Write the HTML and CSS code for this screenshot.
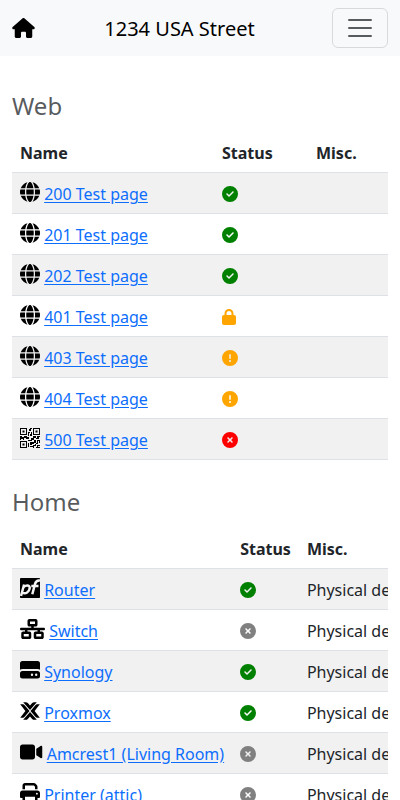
FILE: index.html
```html
<!DOCTYPE html>
<html lang="en">
<head>
<meta charset="utf-8">
<meta name="viewport" content="width=device-width, initial-scale=1">
<title>1234 USA Street</title>
<link rel="stylesheet" href="styles.css">
</head>
<body>
<svg class="sprite" aria-hidden="true">
  <symbol id="house" viewBox="0 0 576 512"><path d="M575.8 255.5c0 18-15 32.1-32 32.1h-32l.7 160.2c0 2.7-.2 5.4-.5 8.1V472c0 22.1-17.9 40-40 40H392c-22.1 0-40-17.9-40-40V384c0-17.7-14.3-32-32-32H256c-17.7 0-32 14.3-32 32v88c0 22.1-17.9 40-40 40H104c-22.1 0-40-17.9-40-40V287.6H32c-18 0-32-14-32-32.1c0-9 3-17 10-24L266.4 8c7-7 15-8 22-8s15 2 21 7L564.8 231.5c8 7 12 15 11 24z"/></symbol>
  <symbol id="globe" viewBox="0 0 512 512"><path d="M352 256c0 22.2-1.2 43.6-3.3 64H163.3c-2.2-20.4-3.3-41.8-3.3-64s1.2-43.6 3.3-64H348.7c2.2 20.4 3.3 41.8 3.3 64zm28.8-64H503.9c5.3 20.5 8.1 41.9 8.1 64s-2.8 43.5-8.1 64H380.8c2.1-20.6 3.2-42 3.2-64s-1.1-43.4-3.2-64zm112.6-32H376.7c-10-63.9-29.8-117.4-55.3-151.6c78.3 20.7 142 77.5 171.9 151.6zm-149.1 0H167.7c6.1-36.4 15.5-68.6 27-94.7c10.5-23.6 22.2-40.7 33.5-51.5C239.4 3.2 248.7 0 256 0s16.6 3.2 27.8 13.8c11.3 10.8 23 27.9 33.5 51.5c11.6 26 20.9 58.2 27 94.7zm-209 0H18.6C48.6 85.9 112.2 29.1 190.6 8.4C165.1 42.6 145.3 96.1 135.3 160zM8.1 192H131.2c-2.1 20.6-3.2 42-3.2 64s1.1 43.4 3.2 64H8.1C2.8 299.5 0 278.1 0 256s2.8-43.5 8.1-64zM194.7 446.6c-11.6-26-20.9-58.2-27-94.6H344.3c-6.1 36.4-15.5 68.6-27 94.6c-10.5 23.6-22.2 40.7-33.5 51.5C272.6 508.8 263.3 512 256 512s-16.6-3.2-27.8-13.8c-11.3-10.8-23-27.9-33.5-51.5zM135.3 352c10 63.9 29.8 117.4 55.3 151.6C112.2 482.9 48.6 426.1 18.6 352H135.3zm358.1 0c-30 74.1-93.6 130.9-171.9 151.6c25.5-34.2 45.2-87.7 55.3-151.6H493.4z"/></symbol>
  <symbol id="check" viewBox="0 0 512 512"><path d="M256 512A256 256 0 1 0 256 0a256 256 0 1 0 0 512zM369 209L241 337c-9.4 9.4-24.6 9.4-33.9 0l-64-64c-9.4-9.4-9.4-24.6 0-33.9s24.6-9.4 33.9 0l47 47L335 175c9.4-9.4 24.6-9.4 33.9 0s9.4 24.6 0 33.9z"/></symbol>
  <symbol id="xmark" viewBox="0 0 512 512"><path d="M256 512A256 256 0 1 0 256 0a256 256 0 1 0 0 512zM175 175c9.4-9.4 24.6-9.4 33.9 0l47 47 47-47c9.4-9.4 24.6-9.4 33.9 0s9.4 24.6 0 33.9l-47 47 47 47c9.4 9.4 9.4 24.6 0 33.9s-24.6 9.4-33.9 0l-47-47-47 47c-9.4 9.4-24.6 9.4-33.9 0s-9.4-24.6 0-33.9l47-47-47-47c-9.4-9.4-9.4-24.6 0-33.9z"/></symbol>
  <symbol id="exclaim" viewBox="0 0 512 512"><path d="M256 512A256 256 0 1 0 256 0a256 256 0 1 0 0 512zm0-384c13.3 0 24 10.7 24 24V264c0 13.3-10.7 24-24 24s-24-10.7-24-24V152c0-13.3 10.7-24 24-24zM224 352a32 32 0 1 1 64 0 32 32 0 1 1 -64 0z"/></symbol>
  <symbol id="lock" viewBox="0 0 448 512"><path d="M144 144v48H304V144c0-44.2-35.8-80-80-80s-80 35.8-80 80zM80 192V144C80 64.5 144.5 0 224 0s144 64.5 144 144v48h16c35.3 0 64 28.7 64 64V448c0 35.3-28.7 64-64 64H64c-35.3 0-64-28.7-64-64V256c0-35.3 28.7-64 64-64H80z"/></symbol>
  <symbol id="network" viewBox="0 0 640 512"><path d="M256 64H384v64H256V64zM240 0c-26.5 0-48 21.5-48 48v96c0 26.5 21.5 48 48 48h48v32H32c-17.7 0-32 14.3-32 32s14.3 32 32 32h96v32H80c-26.5 0-48 21.5-48 48v96c0 26.5 21.5 48 48 48H240c26.5 0 48-21.5 48-48V368c0-26.5-21.5-48-48-48H192V288H448v32H400c-26.5 0-48 21.5-48 48v96c0 26.5 21.5 48 48 48H560c26.5 0 48-21.5 48-48V368c0-26.5-21.5-48-48-48H512V288h96c17.7 0 32-14.3 32-32s-14.3-32-32-32H352V192h48c26.5 0 48-21.5 48-48V48c0-26.5-21.5-48-48-48H240zM96 448V384H224v64H96zm320-64H544v64H416V384z"/></symbol>
  <symbol id="video" viewBox="0 0 576 512"><path d="M0 128C0 92.7 28.7 64 64 64H320c35.3 0 64 28.7 64 64V384c0 35.3-28.7 64-64 64H64c-35.3 0-64-28.7-64-64V128zM559.1 99.8c10.4 5.6 16.9 16.4 16.9 28.2V384c0 11.8-6.5 22.6-16.9 28.2s-23 5-32.9-1.6l-96-64L416 337.1V320 192 174.9l14.2-9.5 96-64c9.8-6.5 22.4-7.2 32.9-1.6z"/></symbol>
  <symbol id="print" viewBox="0 0 512 512"><path d="M128 0C92.7 0 64 28.7 64 64v96h64V64H354.7L384 93.3V160h64V93.3c0-17-6.7-33.3-18.7-45.3L400 18.7C388 6.7 371.7 0 354.7 0H128zM384 352v32 64H128V384 368 352H384zm64 32h32c17.7 0 32-14.3 32-32V256c0-35.3-28.7-64-64-64H64c-35.3 0-64 28.7-64 64v96c0 17.7 14.3 32 32 32H64v64c0 35.3 28.7 64 64 64H384c35.3 0 64-28.7 64-64V384zM432 248a24 24 0 1 1 0 48 24 24 0 1 1 0-48z"/></symbol>
  <symbol id="drive" viewBox="0 0 20 20"><path fill-rule="evenodd" d="M2.500 1h15A2.500 2.500 0 0 1 20 3.500V9.700Q19 9.100 17.500 9.100H2.500Q1 9.100 0 9.700V3.500A2.500 2.500 0 0 1 2.500 1zM2.500 11h15a2.500 2.500 0 0 1 2.500 2.500v2.500a2.500 2.500 0 0 1-2.500 2.500h-15A2.500 2.500 0 0 1 0 16v-2.500A2.500 2.500 0 0 1 2.500 11zM12 13.500a1.200 1.200 0 1 0 0 2.400 1.200 1.200 0 0 0 0-2.400zM16.200 13.500a1.200 1.200 0 1 0 0 2.400 1.200 1.200 0 0 0 0-2.400z"/></symbol>
  <symbol id="proxmox" viewBox="0 0 20 20">
    <path d="M3.200 1.200H5.800Q7 1.200 7.800 2.100L10 4.500 12.200 2.100Q13 1.200 14.200 1.200H16.800L10 8.900zM3.200 18.800H5.800Q7 18.800 7.800 17.900L10 15.500 12.200 17.900Q13 18.800 14.200 18.800H16.800L10 11.100z"/>
    <path d="M.2 3.300H2.800Q3.900 3.300 4.600 4.200L9.500 10 4.600 15.800Q3.900 16.700 2.800 16.700H.2L5.400 10zM19.800 3.300H17.200Q16.100 3.300 15.400 4.200L10.500 10 15.400 15.800Q16.100 16.700 17.200 16.700H19.800L14.600 10z"/>
  </symbol>
  <symbol id="pfsense" viewBox="0 0 20 20">
    <rect width="20" height="20" rx=".8"/>
    <g fill="none" stroke="#f4f4f4" stroke-width="2.500">
      <path d="M1 18 4.100 6.500M3.500 9.500C5 6.800 10 6.500 9.700 10.200 9.400 14 5.500 16.500 2.500 14.700"/>
      <path d="M12.300 16.300 15 6Q16 1.900 20 2.500M11.300 7.900H18.500"/>
    </g>
  </symbol>
  <symbol id="qr" viewBox="0 0 20 20"><path fill-rule="evenodd" d="M0 0h7v7H0zM1 1v5h5V1zM2.500 2.500h2v2h-2zM13 0h7v7h-7zM14 1v5h5V1zM15.500 2.500h2v2h-2zM0 13h7v7H0zM1 14v5h5v-5zM2.500 15.500h2v2h-2zM10 0h2v1h-1v2h-2V1h1zM8 4h2v1H9v3H8zM11 4h1v4h-2V6h1zM0 8h2v1h2V8h3v1h2v2H6v-1H4v2H3v-1H1v1H0zM8 12h3v-2h2V8h3v2h-2v2h-2v1H8zM17 8h3v1h-1v2h-3v-1h1zM10 14h4v-2h2v3h-2v1h-2v1h-2zM17 12h3v3h-1v-2h-1v3h-2v-1h1zM8 15h1v4H8zM10 18h3v-1h2v-1h1v2h-2v2h-1v-1h-3zM17 17h3v1h-2v1h2v1h-4v-1h1z"/></symbol>
</svg>

<nav class="navbar">
  <a class="home" href="#" aria-label="Home"><svg class="icon icon-wide"><use href="#house"/></svg></a>
  <a class="brand" href="#">1234 USA Street</a>
  <button class="toggler" type="button" aria-label="Menu"><svg viewBox="0 0 30 30"><path d="M4 7h22M4 15h22M4 23h22"/></svg></button>
</nav>

<main>
  <section>
    <h2>Web</h2>
    <table class="web">
      <colgroup><col class="col-name"><col class="col-status"><col></colgroup>
      <thead><tr><th>Name</th><th>Status</th><th>Misc.</th></tr></thead>
      <tbody>
        <tr><td><svg class="icon"><use href="#globe"/></svg> <a href="#">200 Test page</a></td><td><svg class="status ok"><use href="#check"/></svg></td><td></td></tr>
        <tr><td><svg class="icon"><use href="#globe"/></svg> <a href="#">201 Test page</a></td><td><svg class="status ok"><use href="#check"/></svg></td><td></td></tr>
        <tr><td><svg class="icon"><use href="#globe"/></svg> <a href="#">202 Test page</a></td><td><svg class="status ok"><use href="#check"/></svg></td><td></td></tr>
        <tr><td><svg class="icon"><use href="#globe"/></svg> <a href="#">401 Test page</a></td><td><svg class="status locked"><use href="#lock"/></svg></td><td></td></tr>
        <tr><td><svg class="icon"><use href="#globe"/></svg> <a href="#">403 Test page</a></td><td><svg class="status warn"><use href="#exclaim"/></svg></td><td></td></tr>
        <tr><td><svg class="icon"><use href="#globe"/></svg> <a href="#">404 Test page</a></td><td><svg class="status warn"><use href="#exclaim"/></svg></td><td></td></tr>
        <tr><td><svg class="icon"><use href="#qr"/></svg> <a href="#">500 Test page</a></td><td><svg class="status error"><use href="#xmark"/></svg></td><td></td></tr>
      </tbody>
    </table>
  </section>

  <section>
    <h2>Home</h2>
    <table>
      <thead><tr><th>Name</th><th>Status</th><th>Misc.</th></tr></thead>
      <tbody>
        <tr><td><svg class="icon"><use href="#pfsense"/></svg> <a href="#">Router</a></td><td><svg class="status ok"><use href="#check"/></svg></td><td>Physical device</td></tr>
        <tr><td><svg class="icon icon-wider"><use href="#network"/></svg> <a href="#">Switch</a></td><td><svg class="status off"><use href="#xmark"/></svg></td><td>Physical device</td></tr>
        <tr><td><svg class="icon"><use href="#drive"/></svg> <a href="#">Synology</a></td><td><svg class="status ok"><use href="#check"/></svg></td><td>Physical device</td></tr>
        <tr><td><svg class="icon"><use href="#proxmox"/></svg> <a href="#">Proxmox</a></td><td><svg class="status ok"><use href="#check"/></svg></td><td>Physical device</td></tr>
        <tr><td><svg class="icon icon-wide"><use href="#video"/></svg> <a href="#">Amcrest1 (Living Room)</a></td><td><svg class="status off"><use href="#xmark"/></svg></td><td>Physical device</td></tr>
        <tr><td><svg class="icon"><use href="#print"/></svg> <a href="#">Printer (attic)</a></td><td><svg class="status off"><use href="#xmark"/></svg></td><td>Physical device</td></tr>
      </tbody>
    </table>
  </section>
</main>
</body>
</html>
```
FILE: styles.css
```css
* {
  box-sizing: border-box;
}

body {
  margin: 0;
  height: 100vh;
  overflow: hidden;
  background: #fff;
  color: #212529;
  font: 16px/24px "Noto Sans", "Liberation Sans", sans-serif;
}

.sprite {
  display: none;
}

.navbar {
  display: flex;
  align-items: center;
  justify-content: space-between;
  height: 56px;
  padding: 0 12px;
  background: #f8f9fa;
}

.home {
  display: flex;
  color: #000;
}

.brand {
  margin-right: 8px;
  padding-top: 2px;
  color: #000;
  font-size: 20px;
  line-height: 30px;
  text-decoration: none;
}

.toggler {
  display: flex;
  align-items: center;
  justify-content: center;
  width: 56px;
  height: 40px;
  padding: 0;
  border: 1px solid rgba(33, 37, 41, .15);
  border-radius: 6px;
  background: transparent;
}

.toggler svg {
  width: 30px;
  height: 30px;
  fill: none;
  stroke: rgba(33, 37, 41, .75);
  stroke-width: 2;
  stroke-linecap: round;
}

main {
  padding: 8px 12px 0;
}

section {
  overflow: hidden;
}

h2 {
  height: 68px;
  margin: 0;
  padding-top: 28px;
  color: rgba(33, 37, 41, .75);
  font-size: 24px;
  font-weight: 400;
  line-height: 28.8px;
}

table {
  width: 100%;
  border-collapse: separate;
  border-spacing: 0;
  white-space: nowrap;
}

.web {
  table-layout: fixed;
}

.col-name {
  width: 202px;
}

.col-status {
  width: 94px;
}

th,
td {
  height: 41px;
  padding: 9px 8px 7px;
  border-bottom: 1px solid #dee2e6;
  text-align: left;
  vertical-align: top;
}

tbody tr:nth-child(odd) {
  background: #f1f1f1;
}

td a {
  color: #0d6efd;
  text-decoration: underline;
  text-underline-offset: 2px;
}

.icon {
  width: 20px;
  height: 20px;
  fill: #000;
}

td .icon {
  margin-top: -4px;
  vertical-align: -2px;
}

.home .icon {
  width: 23px;
}

.icon-wide {
  width: 22.5px;
}

.icon-wider {
  width: 25px;
}

.status {
  width: 16px;
  height: 16px;
  vertical-align: -2px;
}

.ok {
  fill: green;
}

.warn,
.locked {
  fill: orange;
}

.locked {
  width: 14px;
}

.error {
  fill: red;
}

.off {
  fill: gray;
}
```
